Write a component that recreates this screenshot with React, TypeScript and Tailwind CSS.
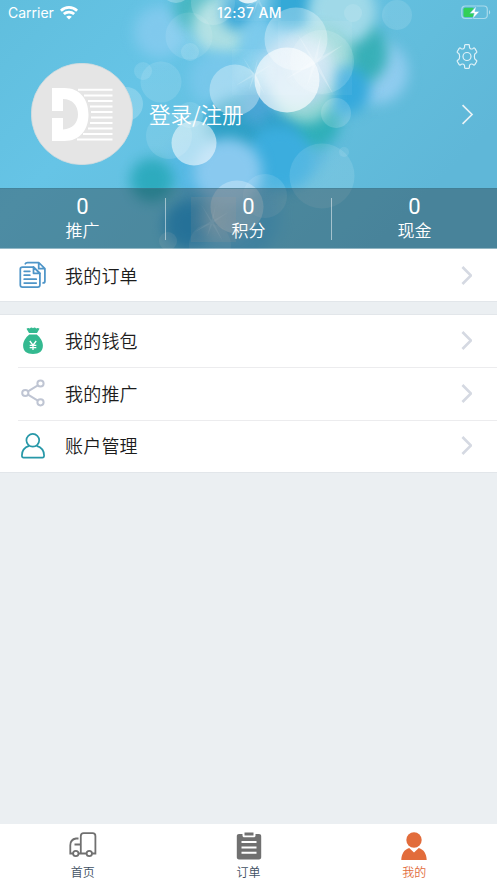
import React from 'react';

const BLOBS = [
  { x: 285, y: 60, r: 70, c: '#6cc6ea', o: 0.8 },
  { x: 270, y: 130, r: 62, c: '#45aedd', o: 0.65 },
  { x: 230, y: 215, r: 50, c: '#48aee0', o: 0.6 },
  { x: 160, y: 32, r: 26, c: '#8accf0', o: 0.75 },
  { x: 197, y: 8, r: 23, c: '#45b6c0', o: 0.95 },
  { x: 222, y: 26, r: 29, c: '#b0e0e2', o: 0.95 },
  { x: 240, y: 12, r: 19, c: '#36a6d8', o: 0.95 },
  { x: 268, y: 40, r: 28, c: '#7ecbed', o: 0.9 },
  { x: 290, y: 4, r: 26, c: '#2fa6d6', o: 0.9 },
  { x: 217, y: 80, r: 28, c: '#7ac8ec', o: 0.85 },
  { x: 376, y: 72, r: 32, c: '#90ccef', o: 1 },
  { x: 355, y: 53, r: 33, c: '#38b0b8', o: 1 },
  { x: 342, y: 12, r: 34, c: '#a0d9e8', o: 1 },
  { x: 322, y: 56, r: 30, c: '#8dd3d2', o: 0.95 },
  { x: 236, y: 128, r: 30, c: '#2a9fc4', o: 0.9 },
  { x: 312, y: 121, r: 28, c: '#30b0b9', o: 1 },
  { x: 346, y: 90, r: 24, c: '#35a9dc', o: 1 },
  { x: 260, y: 108, r: 19, c: '#4ba5d6', o: 0.9 },
  { x: 280, y: 128, r: 18, c: '#2a9ec6', o: 0.8 },
  { x: 305, y: 94, r: 29, c: '#92d5d3', o: 1 },
  { x: 298, y: 70, r: 36, c: '#b9d9f0', o: 0.9 },
  { x: 280, y: 158, r: 32, c: '#3badde', o: 1 },
  { x: 194, y: 168, r: 28, c: '#55b8e6', o: 0.8 },
  { x: 188, y: 225, r: 24, c: '#2398d4', o: 0.85 },
  { x: 228, y: 218, r: 26, c: '#6cbae2', o: 0.8 },
  { x: 228, y: 172, r: 34, c: '#89c9ef', o: 1 },
  { x: 152, y: 180, r: 22, c: '#2baabd', o: 0.95 },
];

const BUBBLES = [
  { x: 322, y: 62, r: 32, o: 0.15 },
  { x: 296, y: 39, r: 31.5, o: 0.33 },
  { x: 235, y: 90, r: 25.5, o: 0.35 },
  { x: 287, y: 80, r: 32.5, o: 0.66 },
  { x: 169, y: 136, r: 23, o: 0.12 },
  { x: 190, y: 115, r: 13, o: 0.12 },
  { x: 194, y: 143, r: 22.5, o: 0.55 },
  { x: 161, y: 82, r: 20.5, o: 0.12 },
  { x: 143, y: 71, r: 9, o: 0.12 },
  { x: 126, y: 104, r: 17, o: 0.22 },
  { x: 189, y: 36, r: 23.5, o: 0.1 },
  { x: 190, y: 52, r: 9, o: 0.13 },
  { x: 176, y: -12, r: 15, o: 0.25 },
  { x: 213, y: 3, r: 22, o: 0.15 },
  { x: 248, y: -11, r: 14.5, o: 0.8 },
  { x: 397, y: 15, r: 15, o: 0.12 },
  { x: 353, y: 13, r: 9, o: 0.12 },
  { x: 336, y: 113, r: 15, o: 0.16 },
  { x: 322, y: 176, r: 32.5, o: 0.12 },
  { x: 344, y: 152, r: 5, o: 0.1 },
  { x: 265, y: 196, r: 22, o: 0.12 },
  { x: 237, y: 207, r: 26.5, o: 0.3 },
  { x: 168, y: 241, r: 9, o: 0.14 },
  { x: 210, y: 245, r: 21, o: 0.1 },
];

const SPARKS = [
  { x: 232, y: 49, s: 46, cx: 254, cy: 75, o: 0.5 },
  { x: 278, y: 21, s: 74, cx: 315, cy: 62, o: 0.6 },
  { x: 191, y: 197, s: 45, cx: 212, cy: 222, o: 0.4 },
  { x: 235, y: -25, s: 46, cx: 258, cy: 0, o: 0.5 },
];

const Bokeh = () => (
  <svg className="absolute inset-0" width="497" height="249" viewBox="0 0 497 249">
    <defs>
      <linearGradient id="sky" x1="0" y1="0" x2="1" y2="0.5">
        <stop offset="0" stopColor="#60bedd" />
        <stop offset="0.35" stopColor="#66c4e6" />
        <stop offset="0.75" stopColor="#62bddc" />
        <stop offset="1" stopColor="#5fb7d8" />
      </linearGradient>
      <radialGradient id="glow">
        <stop offset="0" stopColor="#fff" stopOpacity="0.9" />
        <stop offset="1" stopColor="#fff" stopOpacity="0.12" />
      </radialGradient>
      <radialGradient id="warm">
        <stop offset="0" stopColor="#ffdccb" stopOpacity="0.9" />
        <stop offset="1" stopColor="#ffdccb" stopOpacity="0.45" />
      </radialGradient>
      <linearGradient id="bubble" x1="0" y1="0" x2="0" y2="1">
        <stop offset="0" stopColor="#fff" stopOpacity="0.9" />
        <stop offset="1" stopColor="#fff" />
      </linearGradient>
      <filter id="soft" x="-60%" y="-60%" width="220%" height="220%" colorInterpolationFilters="sRGB">
        <feGaussianBlur stdDeviation="6.5" />
      </filter>
    </defs>
    <rect width="497" height="249" fill="url(#sky)" />
    {BLOBS.map((b, i) => (
      <circle key={i} cx={b.x} cy={b.y} r={b.r} fill={b.c} opacity={b.o} filter="url(#soft)" />
    ))}
    {BUBBLES.map((b, i) => (
      <circle key={i} cx={b.x} cy={b.y} r={b.r} fill="url(#bubble)" opacity={b.o} />
    ))}
    {SPARKS.map((s, i) => (
      <g key={i} opacity={s.o}>
        <rect x={s.x} y={s.y} width={s.s} height={s.s} fill={i === 2 ? 'url(#warm)' : 'url(#glow)'} opacity="0.7" />
        <g transform={`translate(${s.cx} ${s.cy}) scale(${s.s / 74})`} fill="#fff" opacity="0.5">
          <path d="M-18-29 1.500 1-1 1.500ZM18 32-1.500 1 1.500-1.500ZM28-17 1 2-1.500-1ZM-29 17-1-2 1.500 1ZM6-27 1.500 1-1.500 0ZM-8 24-1.500-1 1.500 1Z" />
        </g>
      </g>
    ))}
  </svg>
);

const Logo = () => (
  <svg width="102" height="102" viewBox="0 0 102 102">
    <circle cx="51" cy="51" r="50.7" fill="#e5e5e5" stroke="#d3dadd" strokeWidth="0.8" />
    <path
      d="M21 25h12.500C48.500 25 57.500 36 57.500 51.500S48.500 78 33.500 78H21V55h11v11.500C41.500 66 47 60 47 51.300S41.500 36 32 36v12H21Z"
      fill="#fff"
    />
    <path
      d="M47 26.800h34.500M53 32.400h28.500M57 38h24.500M59 43.500h22.500M60 49h21.500M60 54.500h21.500M59 60h22.500M57 65.500h24.500M52 71h29.500M46 76.500h35.500"
      stroke="#fff"
      strokeWidth="2"
    />
  </svg>
);

const Chevron = ({ className }: { className: string }) => (
  <svg className={className} viewBox="0 0 12 20" fill="none" stroke="currentColor">
    <path d="M1.500 1 10.500 10l-9 9" />
  </svg>
);

const OrdersIcon = () => (
  <svg width="28" height="28" viewBox="0 0 28 28" fill="none" stroke="#4e95c8" strokeWidth="1.750" strokeLinejoin="round" strokeLinecap="round">
    <path d="M14.500 6H3.500C2 6 1.300 6.800 1.300 8v16c0 1.300.7 2.100 2.200 2.100h15.200c1.500 0 2.200-.8 2.200-2.100V12.300Z" />
    <path d="M14.500 6v6.300h6.400ZM5.200 10.300h5.600M5.200 14.200h5.600M5.200 18.200h12M5.200 22h12" />
    <path d="M6.300 2.800c.3-.8 1-1.300 2.200-1.300h11.200l6.200 6.200v12.500c0 1-.5 1.700-1.800 1.700M19.700 1.500v6.200h6.200" />
  </svg>
);

const WalletIcon = () => (
  <svg width="22" height="28" viewBox="0 0 22 28">
    <path d="M4.500 1.800c1-.9 2.200-1.200 3.300-.3 1-1.300 2.200-1.300 3.200-.3 1-1 2.200-1 3.200.3 1.100-.9 2.300-.6 3.300.3L15 5.900H7Z" fill="#34b990" />
    <path d="M7.200 7.400h7.600c3.400 3 6.100 6.600 6.100 11.100 0 5.700-3.700 8.500-9.900 8.500S1.100 24.200 1.100 18.500c0-4.500 2.700-8.100 6.100-11.100Z" fill="#34b990" />
    <path d="m7.800 14 3.200 4.200 3.200-4.200M11 18v5M7.700 18.300h6.600M7.700 20.600h6.600" fill="none" stroke="#fff" strokeWidth="1.300" />
  </svg>
);

const ShareIcon = () => (
  <svg width="24" height="28" viewBox="0 0 24 28" fill="none" stroke="#bfc5d3" strokeWidth="2">
    <circle cx="4.300" cy="14" r="3.100" />
    <circle cx="19.500" cy="4.500" r="3.100" />
    <circle cx="19.500" cy="23.300" r="3.100" />
    <path d="m7 12.300 9.800-6M7 15.600l9.800 6" />
  </svg>
);

const AccountIcon = () => (
  <svg width="24" height="26" viewBox="0 0 24 26" fill="none" stroke="#2798a8" strokeWidth="1.700">
    <circle cx="11.800" cy="7.300" r="6.400" />
    <path d="M8.200 12.900C3.700 14.300.9 17.500.9 22.500c0 1.600.5 2.200 1.700 2.200h18.800c1.200 0 1.700-.6 1.700-2.200 0-5-2.800-8.200-7.500-9.600" />
  </svg>
);

const Row = ({ icon, label, inset }: { icon: React.ReactNode; label: string; inset?: boolean }) => (
  <div className="relative flex h-[52.4px] items-center bg-white pr-[25px]">
    {inset && <span className="absolute top-0 right-0 left-[18px] h-px bg-[#ececee]" />}
    <span className="flex w-[65px] justify-center">{icon}</span>
    <span className="flex-1 pb-px text-[18px] leading-6 font-[350] tracking-[0.2px] text-[#1c1c1c]">{label}</span>
    <Chevron className="h-[19px] w-[11.4px] stroke-[2.8] text-[#d5d9e2]" />
  </div>
);

const STATS = ['推广', '积分', '现金'];

const TruckIcon = () => (
  <svg width="28" height="26" viewBox="0 0 28 26" fill="none" stroke="#707070" strokeWidth="1.800">
    <path d="M11.800 21.500V4c0-1.900.9-2.800 2.800-2.800h9c1.900 0 2.800.9 2.800 2.800v17.500h-3.300M9.500 6.500H7c-3.700.6-5.700 3.200-5.700 6.800v8.200h2.900M9.500 21.500h8M5.500 12.500h6" />
    <circle cx="6.800" cy="21.500" r="2.700" />
    <circle cx="20.300" cy="21.500" r="2.700" />
  </svg>
);

const ClipboardIcon = () => (
  <svg width="26" height="28" viewBox="0 0 26 28">
    <path d="M3 2h3.500v1.500c0 1.200.7 1.800 1.800 1.800h9.400c1.100 0 1.800-.6 1.800-1.800V2H23c1.400 0 2.200.8 2.200 2.200v21c0 1.400-.8 2.200-2.200 2.200H3c-1.400 0-2.200-.8-2.200-2.200v-21C.8 2.800 1.600 2 3 2Z" fill="#707070" />
    <path d="M8.500.5h9v3h-9Z" fill="#707070" />
    <path d="M5.500 10h15M5.500 15.500h15M5.500 20.800h15" stroke="#fff" strokeWidth="2" />
  </svg>
);

const MineIcon = () => (
  <svg width="26" height="28" viewBox="0 0 26 28" fill="#e26c3b">
    <circle cx="13" cy="8" r="7.700" />
    <path d="M8.200 16 13 20.600l4.800-4.600c5.100 1.600 7.700 5.800 7.900 12H.3c.2-6.200 2.800-10.400 7.900-12Z" />
  </svg>
);

const TABS = [
  { label: '首页', icon: <TruckIcon />, color: 'text-[#3f5163]' },
  { label: '订单', icon: <ClipboardIcon />, color: 'text-[#3f5163]' },
  { label: '我的', icon: <MineIcon />, color: 'text-[#e26c3b]' },
];

export default function App() {
  return (
    <div className="flex h-[883px] w-[497px] flex-col overflow-hidden bg-[#ebeff2] font-['Noto_Sans_CJK_SC',sans-serif]">
      <header className="relative h-[249px] shrink-0 overflow-hidden">
        <Bokeh />
        <div className="relative flex h-full flex-col text-white">
          <div className="grid h-[26px] grid-cols-3 items-center pr-[6px] pb-px pl-[8px] font-[Inter,sans-serif] text-[14px]">
            <div className="flex items-center gap-[6px]">
              <span>Carrier</span>
              <svg width="18" height="14" viewBox="0 0 18 14" fill="none" stroke="#fff" strokeWidth="2.700">
                <path d="M.9 4.700c4.600-4.300 11.600-4.300 16.200 0M3.800 8.100c3-2.700 7.400-2.700 10.400 0" />
                <path d="M6.200 10.700c1.700-1.400 3.900-1.400 5.600 0L9 13.600Z" fill="#fff" stroke="none" />
              </svg>
            </div>
            <span className="text-center text-[14px] font-medium tracking-[0.4px] whitespace-nowrap">12:37 AM</span>
            <svg className="justify-self-end" width="30" height="15" viewBox="0 0 30 15">
              <rect x="0.800" y="1" width="25.500" height="12.500" rx="3.500" fill="none" stroke="#fff" strokeOpacity="0.450" strokeWidth="1.200" />
              <rect x="2.500" y="2.700" width="10.500" height="9.200" rx="1.500" fill="#32cf59" />
              <path d="M28 5v4.500c1.600-.8 1.600-3.700 0-4.500Z" fill="#fff" opacity="0.500" />
              <path d="M15.500 1 8.800 8.300h4.400L11.500 14l7-7.500h-4.600Z" fill="#fff" stroke="#62bddc" strokeWidth="0.500" />
            </svg>
          </div>
          <div className="flex h-[37px] items-start justify-end pt-[18px] pr-[18px]">
            <svg width="24" height="25" viewBox="0 0 24 25" fill="none" stroke="#fff" strokeOpacity="0.800" strokeWidth="1.200" strokeLinejoin="round">
              <path d="M9.600 1.500c0-.5.3-.8.8-.8h3.200c.5 0 .8.300.8.800v1.300c0 1.700 1.800 2.700 3.300 1.900l1-.6c.5-.3.900-.1 1.100.3l1.900 3.100c.3.500.1.900-.3 1.200l-.9.600c-1.500.9-1.500 5.500 0 6.400l.9.600c.4.300.6.700.3 1.200l-1.900 3.100c-.2.400-.6.600-1.100.3l-1-.6c-1.500-.8-3.300.2-3.300 1.900v1.300c0 .5-.3.800-.8.800h-3.200c-.5 0-.8-.3-.8-.8v-1.300c0-1.700-1.800-2.700-3.300-1.900l-1 .6c-.5.3-.9.100-1.100-.3l-1.900-3.100c-.3-.5-.1-.9.300-1.200l.9-.6c1.500-.9 1.500-5.500 0-6.400l-.9-.6c-.4-.3-.6-.7-.3-1.200l1.900-3.100c.2-.4.6-.6 1.100-.3l1 .6c1.500.8 3.300-.2 3.300-1.900Z" />
              <circle cx="12" cy="12.500" r="4" />
            </svg>
          </div>
          <div className="flex h-[102px] shrink-0 items-center pr-[23px] pl-[31px]">
            <Logo />
            <span className="ml-4 flex-1 text-[21.500px] leading-8 font-[350]">登录/注册</span>
            <Chevron className="h-[21px] w-[12.600px] stroke-[1.600] text-[#e8f2f6]" />
          </div>
          <div className="mt-auto flex h-[61px] shrink-0 items-center border-t border-[#3e7d94]/50 border-b border-b-white/40 bg-[#1c2024]/34">
            {STATS.map((label, i) => (
              <div
                key={label}
                className={`flex h-[42px] flex-1 flex-col items-center justify-center pb-[2px] text-[17px] leading-[23px] font-[350] ${i < 2 ? 'border-r border-white/50' : ''}`}
              >
                <span className="font-[Roboto,sans-serif] text-[22px] font-normal">0</span>
                <span>{label}</span>
              </div>
            ))}
          </div>
        </div>
      </header>

      <section className="border-b border-[#e2e6ea]">
        <Row icon={<OrdersIcon />} label="我的订单" />
      </section>
      <section className="mt-[11.4px] border-y border-[#e2e6ea]">
        <Row icon={<WalletIcon />} label="我的钱包" />
        <Row icon={<ShareIcon />} label="我的推广" inset />
        <Row icon={<AccountIcon />} label="账户管理" inset />
      </section>

      <nav className="mt-auto flex h-[59px] shrink-0 bg-white pt-2">
        {TABS.map((tab) => (
          <div key={tab.label} className={`flex flex-1 flex-col items-center text-[12px] leading-4 font-[350] ${tab.color}`}>
            <span className="flex h-8 items-start justify-center">{tab.icon}</span>
            <span>{tab.label}</span>
          </div>
        ))}
      </nav>
    </div>
  );
}
